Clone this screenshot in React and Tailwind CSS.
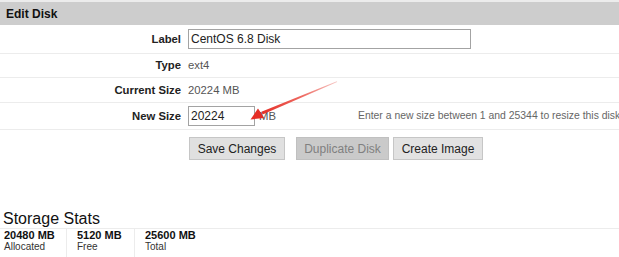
function Row({ label, children, className = "" }) {
  return (
    <div className={`grid grid-cols-[185px_1fr] items-center border-b border-[#ececec] ${className}`}>
      <div className="pr-[4px] text-right text-[11.3px] font-bold text-[#222]">{label}</div>
      <div className="flex items-center pl-[3px] text-[11.3px] text-[#555]">{children}</div>
    </div>
  );
}

function Stat({ value, label, className = "" }) {
  return (
    <div className={`border-r border-[#ececec] ${className}`}>
      <p className="text-[11px] font-bold leading-[12px] text-[#111]">{value}</p>
      <p className="text-[10px] leading-[11px] text-[#333]">{label}</p>
    </div>
  );
}

function Arrow() {
  return (
    <svg className="pointer-events-none absolute left-0 top-0" width="619" height="257" viewBox="0 0 619 257">
      <defs>
        <linearGradient id="shaft" x1="337" y1="81" x2="260" y2="114" gradientUnits="userSpaceOnUse">
          <stop offset="0" stopColor="#f6c9c6" />
          <stop offset="0.45" stopColor="#ee6a62" />
          <stop offset="1" stopColor="#e52d25" />
        </linearGradient>
      </defs>
      <polygon points="336.8,81.2 337.2,82 262.6,114.6 261.4,111.8" fill="url(#shaft)" />
      <polygon points="250.5,119.5 258,108.5 261,113 264,118" fill="#e52d25" />
    </svg>
  );
}

export default function App() {
  return (
    <div className="relative h-[257px] w-[619px] overflow-hidden whitespace-nowrap bg-white font-['Liberation_Sans',Arial,sans-serif]">
      <div className="h-[2px] bg-[#ececec]" />
      <div className="flex h-[23px] items-center bg-[#cdcdcd] pl-[6px] text-[12px] font-bold text-[#111]">
        Edit Disk
      </div>

      <Row label="Label" className="h-[29px]">
        <input
          readOnly
          value="CentOS 6.8 Disk"
          className="h-[20px] w-[283px] border border-[#a3a3a3] bg-white px-[2px] text-[12px] text-[#222] outline-none"
        />
      </Row>
      <Row label="Type" className="h-[24px]">
        ext4
      </Row>
      <Row label="Current Size" className="h-[25px]">
        20224 MB
      </Row>
      <Row label="New Size" className="h-[27px]">
        <input
          readOnly
          value="20224"
          className="h-[20px] w-[67px] border border-[#a3a3a3] bg-white px-[2px] text-[12px] text-[#222] outline-none"
        />
        <span className="ml-[4px] w-[99px]">MB</span>
        <span className="text-[10.4px] text-[#666]">Enter a new size between 1 and 25344 to resize this disk</span>
      </Row>

      <div className="flex h-[75px] items-start pl-[189px] pt-[7px] text-[12px]">
        <button type="button" className="h-[23px] w-[96px] border border-[#c6c6c6] bg-[#e0e0e0] text-[#222]">
          Save Changes
        </button>
        <button
          type="button"
          disabled
          className="ml-[11px] h-[23px] w-[93px] border border-[#c0c0c0] bg-[#cacaca] text-[#808080]"
        >
          Duplicate Disk
        </button>
        <button type="button" className="ml-[4px] h-[23px] w-[90px] border border-[#c6c6c6] bg-[#e2e2e2] text-[#222]">
          Create Image
        </button>
      </div>

      <div className="h-[24px] border-b border-[#ececec] pl-[3px] pt-[6px] text-[16px] leading-[16px] text-[#111]">
        Storage Stats
      </div>
      <div className="flex h-[28px]">
        <Stat value="20480 MB" label="Allocated" className="w-[67px] pl-[4px]" />
        <Stat value="5120 MB" label="Free" className="w-[68px] pl-[10px]" />
        <div className="pl-[10px]">
          <p className="text-[11px] font-bold leading-[12px] text-[#111]">25600 MB</p>
          <p className="text-[10px] leading-[11px] text-[#333]">Total</p>
        </div>
      </div>

      <Arrow />
    </div>
  );
}
